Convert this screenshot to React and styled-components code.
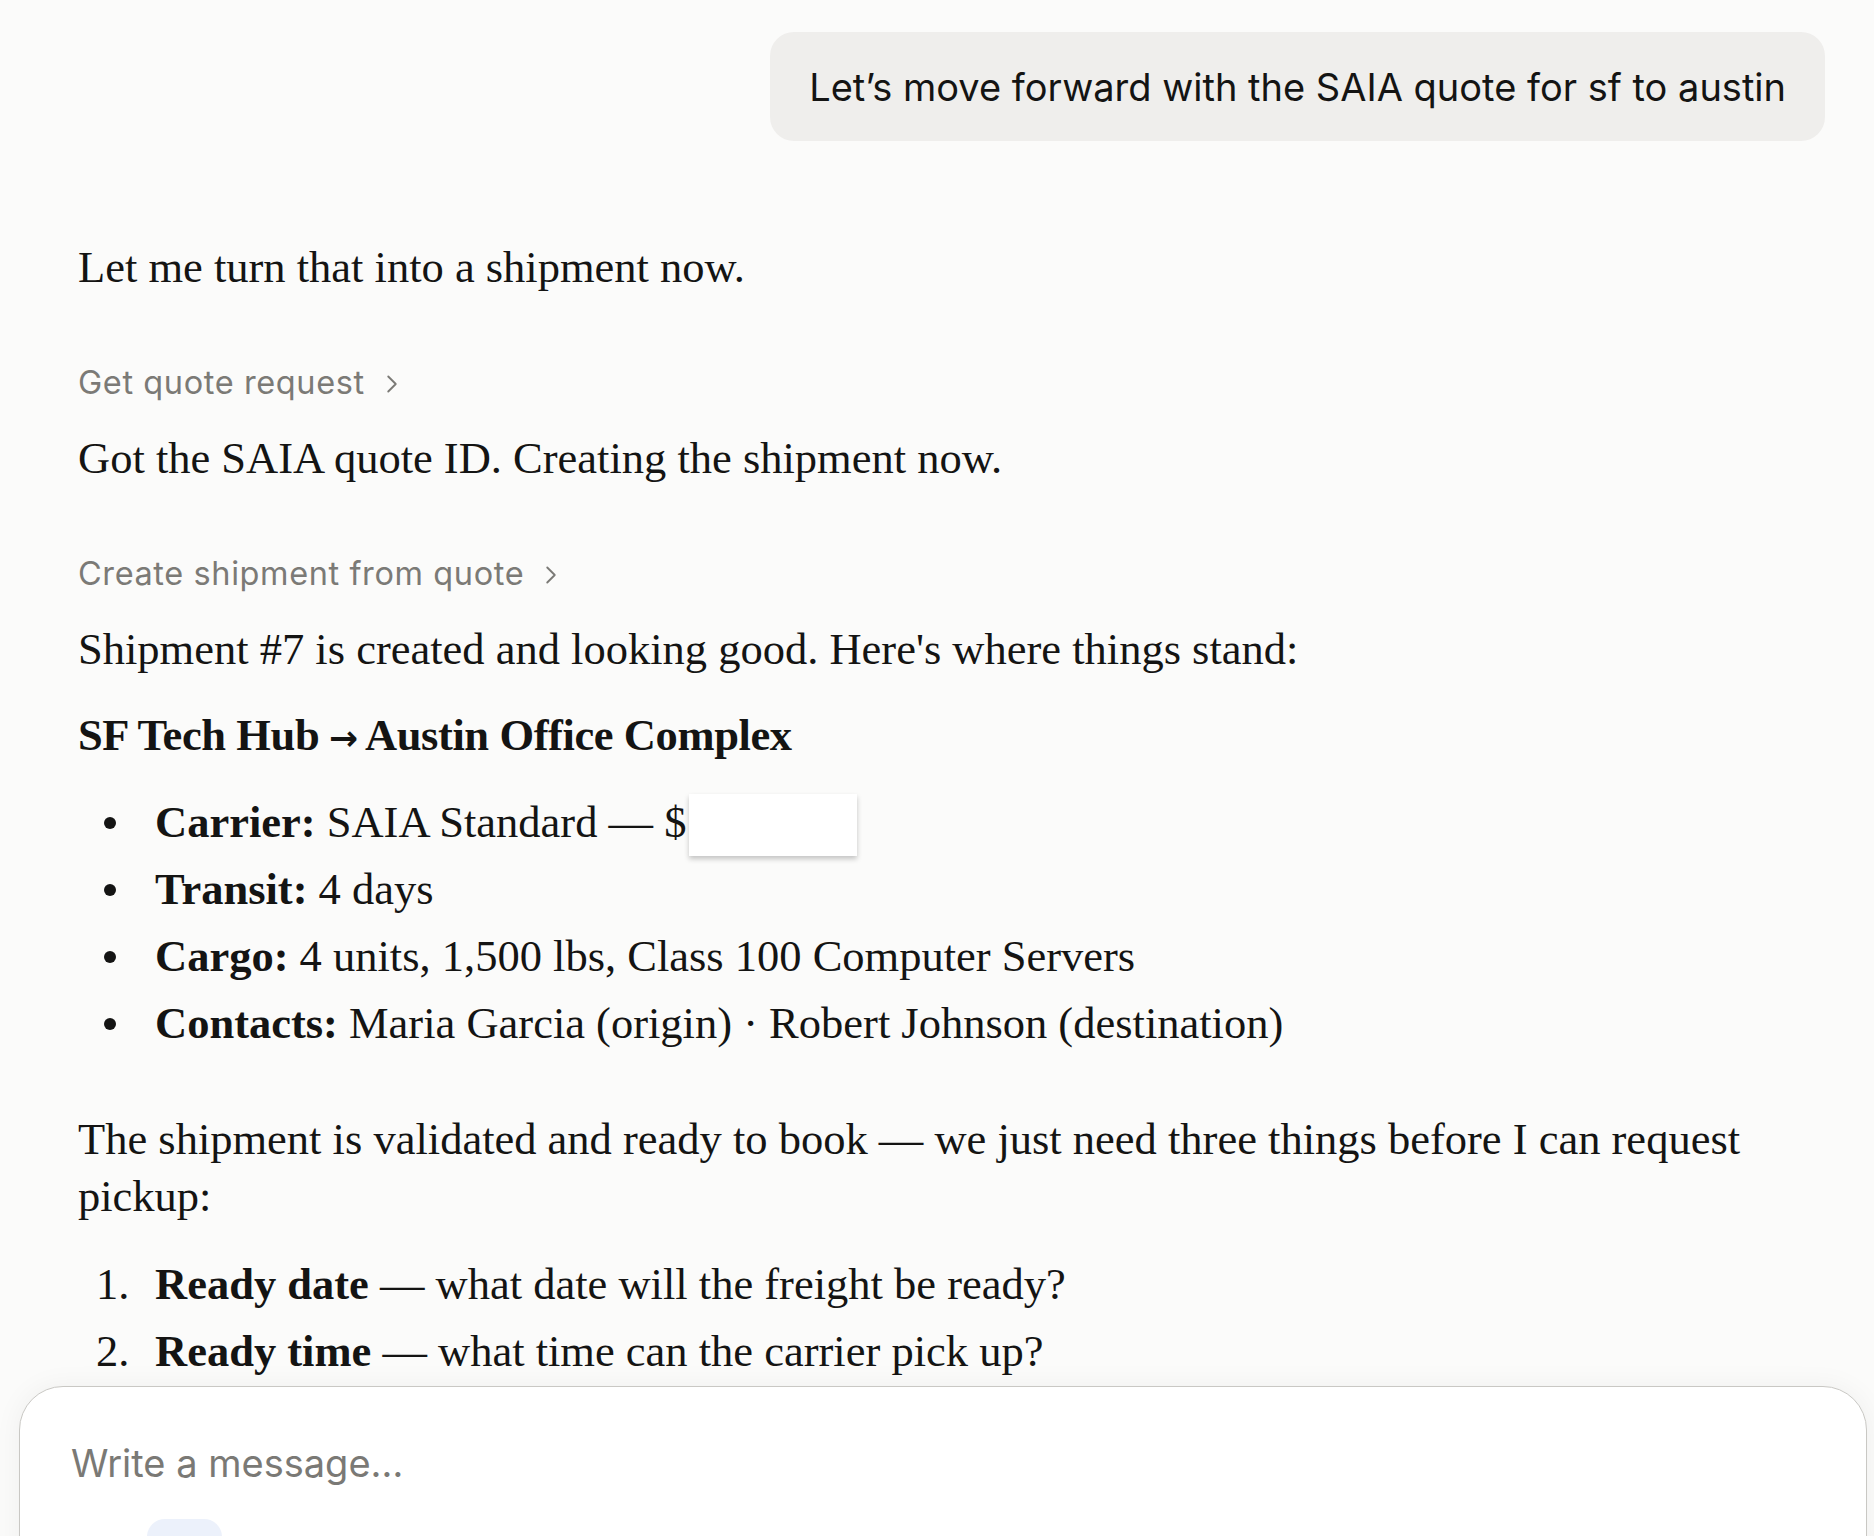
import React from 'react'
import styled, { createGlobalStyle } from 'styled-components'
import { ChevronRight } from 'lucide-react'

const GlobalStyle = createGlobalStyle`
  html, body {
    margin: 0;
    padding: 0;
    background: #fbfbfa;
    overflow: hidden;
  }
  * { box-sizing: border-box; }
`;

const Page = styled.div`
  height: 100vh;
  display: flex;
  flex-direction: column;
  overflow: hidden;
  background: #fbfbfa;
`;

const Thread = styled.div`
  flex: 1;
  min-height: 0;
  overflow: hidden;
  padding: 32px 49px 0 78px;
  display: flex;
  flex-direction: column;
  color: #141413;
`;

const UserRow = styled.div`
  display: flex;
  justify-content: flex-end;
  margin-bottom: 98px;
`;

const UserBubble = styled.div`
  background: #efeeec;
  border-radius: 24px;
  padding: 31px 39px 29px;
  font-family: Inter, "Liberation Sans", sans-serif;
  font-size: 38px;
  line-height: 1.3;
  color: #141413;
`;

const Para = styled.p`
  margin: 0 0 ${p => p.$gap || 0}px;
  font-family: "Liberation Serif", serif;
  font-size: 44.5px;
  line-height: 57px;
`;

const Heading = styled(Para)`
  font-weight: 700;
  letter-spacing: -0.4px;
`;

const Arrow = styled.span`
  font-family: "DejaVu Sans", sans-serif;
  font-size: 0.78em;
  line-height: 0;
  margin: 0 -1px;
`;

const ToolLabel = styled.div`
  display: flex;
  align-items: center;
  gap: 12px;
  margin: 65px 0 25px;
  font-family: Inter, "Liberation Sans", sans-serif;
  font-size: 32.5px;
  letter-spacing: 0.6px;
  line-height: 44px;
  color: #7b7a76;
  svg { margin-top: 2px; }
`;

const List = styled.ul`
  list-style: none;
  margin: 0 0 ${p => p.$gap || 0}px;
  padding: 0;
  font-family: "Liberation Serif", serif;
  font-size: 44.5px;
  line-height: 57px;
`;

const Item = styled.li`
  display: grid;
  grid-template-columns: 77px 1fr;
  margin-bottom: 10px;
  &:last-child { margin-bottom: 0; }
`;

const Dot = styled.span`
  display: flex;
  align-items: center;
  padding-left: 26px;
  &::before {
    content: '';
    width: 12px;
    height: 12px;
    border-radius: 50%;
    background: #141413;
  }
`;

const Num = styled.span`
  justify-self: start;
  padding-left: 18px;
`;

const Redacted = styled.span`
  display: inline-block;
  width: 168px;
  height: 62px;
  margin-left: 3px;
  margin-bottom: -6px;
  vertical-align: -13px;
  background: #fff;
  box-shadow: 0 3px 5px rgba(0, 0, 0, 0.22);
`;

const ComposerArea = styled.div`
  flex: 0 0 150px;
  height: 150px;
  min-height: 0;
  padding: 0 7px 0 19px;
`;

const Composer = styled.div`
  height: 260px;
  background: #fff;
  border: 1px solid #c9c8c4;
  border-radius: 44px;
  box-shadow: 0 0 28px rgba(0, 0, 0, 0.05);
  padding: 52px 51px 0;
`;

const Placeholder = styled.div`
  font-family: Inter, "Liberation Sans", sans-serif;
  font-size: 38px;
  line-height: 48px;
  color: #7a7975;
`;

const Toolbar = styled.div`
  display: flex;
  gap: 12px;
  margin-top: 32px;
  padding-left: 76px;
`;

const ToolButton = styled.div`
  width: ${p => p.$w}px;
  height: 64px;
  border-radius: 18px;
  background: ${p => p.$bg || 'transparent'};
`;

const bullets = [
  ['Carrier:', ' SAIA Standard — $', true],
  ['Transit:', ' 4 days'],
  ['Cargo:', ' 4 units, 1,500 lbs, Class 100 Computer Servers'],
  ['Contacts:', ' Maria Garcia (origin) · Robert Johnson (destination)'],
];

const steps = [
  ['Ready date', ' — what date will the freight be ready?'],
  ['Ready time', ' — what time can the carrier pick up?'],
];

const Tool = ({ children }) => (
  <ToolLabel>
    {children}
    <ChevronRight size={30} strokeWidth={1.5} />
  </ToolLabel>
);

export default function App() {
  return (
    <Page>
      <GlobalStyle />
      <Thread>
        <UserRow>
          <UserBubble>Let’s move forward with the SAIA quote for sf to austin</UserBubble>
        </UserRow>

        <Para>Let me turn that into a shipment now.</Para>
        <Tool>Get quote request</Tool>
        <Para>Got the SAIA quote ID. Creating the shipment now.</Para>
        <Tool>Create shipment from quote</Tool>
        <Para $gap={29}>Shipment #7 is created and looking good. Here's where things stand:</Para>
        <Heading $gap={30}>
          SF Tech Hub <Arrow>→</Arrow> Austin Office Complex
        </Heading>

        <List $gap={59}>
          {bullets.map(([label, text, redact]) => (
            <Item key={label}>
              <Dot />
              <span>
                <strong>{label}</strong>{text}
                {redact && <Redacted />}
              </span>
            </Item>
          ))}
        </List>

        <Para $gap={31}>
          The shipment is validated and ready to book — we just need three things before I can request pickup:
        </Para>

        <List as="ol">
          {steps.map(([label, text], i) => (
            <Item key={label}>
              <Num>{i + 1}.</Num>
              <span><strong>{label}</strong>{text}</span>
            </Item>
          ))}
        </List>
      </Thread>

      <ComposerArea>
        <Composer>
          <Placeholder>Write a message…</Placeholder>
          <Toolbar>
            <ToolButton $w={75} $bg="#ecf1fb" />
          </Toolbar>
        </Composer>
      </ComposerArea>
    </Page>
  )
}
